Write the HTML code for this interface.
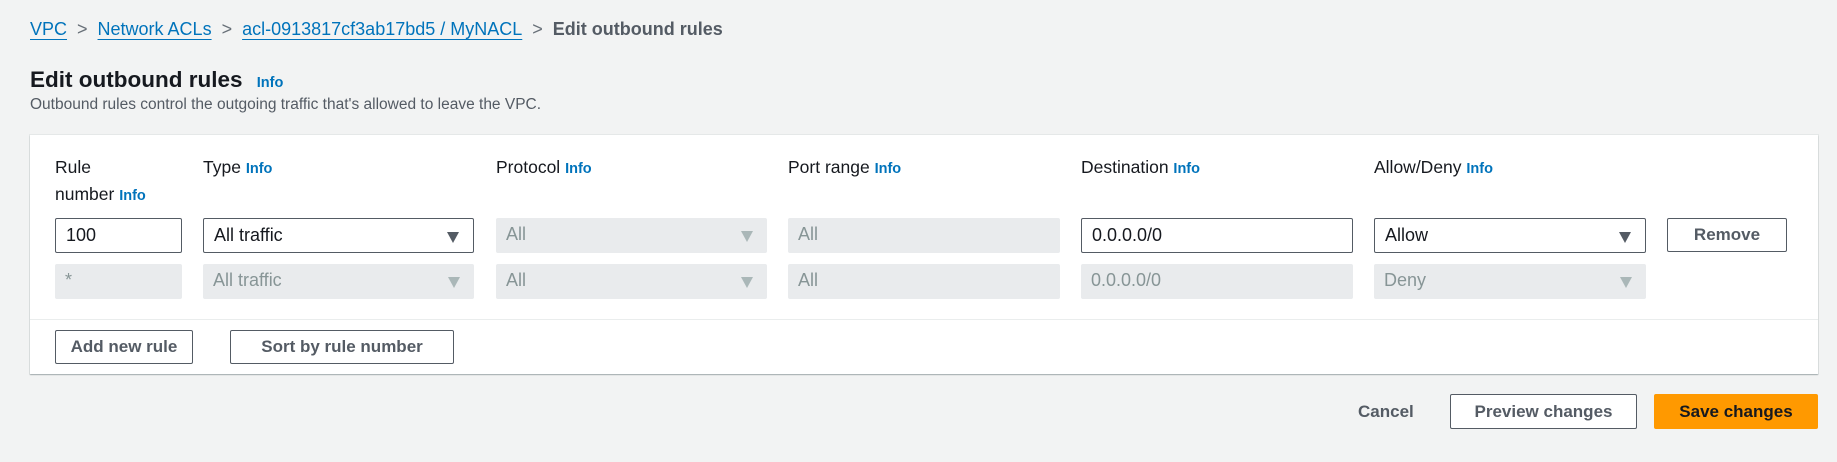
<!DOCTYPE html>
<html><head><style>
body{margin:0;width:1837px;height:462px;background:#f2f3f3;font-family:"Liberation Sans",sans-serif;color:#16191f;position:relative;overflow:hidden}
.a{position:absolute;white-space:nowrap}
.bc{top:19px;font-size:18px}
.bc a{color:#0073bb;text-decoration:underline;text-underline-offset:4px}
.sep{color:#687078;display:inline-block;margin:0 10px}
.info{color:#0073bb;font-weight:bold;font-size:14.5px}
.panel{left:30px;top:135px;width:1788px;height:239px;background:#fff;box-shadow:0 1px 1px rgba(0,28,36,.3),0 0 0 1px #e5e8e8}
.lab{font-size:17.5px;top:157px}
.in{position:absolute;box-sizing:border-box;height:35px;border:1px solid #545b64;border-radius:2px;background:#fff;font-size:18px;padding:6px 10px;color:#16191f}
.dis{border:none;background:#e9ebed;color:#879596}
.arr{position:absolute;right:14px;top:13px;width:0;height:0;border-left:6px solid transparent;border-right:6px solid transparent;border-top:11px solid #545b64}
.dis .arr{border-top-color:#aab7b8}
.btn{position:absolute;box-sizing:border-box;border:1px solid #545b64;border-radius:2px;background:#fff;font-weight:bold;font-size:17px;color:#545b64;text-align:center}
</style></head><body>
<div class="a bc" style="left:30px"><a>VPC</a><span class="sep">&gt;</span><a>Network ACLs</a><span class="sep">&gt;</span><a>acl-0913817cf3ab17bd5 / MyNACL</a><span class="sep">&gt;</span><b style="color:#545b64">Edit outbound rules</b></div>
<div class="a" style="left:30px;top:67px;font-size:22.5px;font-weight:bold">Edit outbound rules <span class="info" style="margin-left:8px">Info</span></div>
<div class="a" style="left:30px;top:96px;font-size:15.5px;color:#545b64">Outbound rules control the outgoing traffic that's allowed to leave the VPC.</div>
<div class="a panel"></div>
<div class="a lab" style="left:55px">Rule</div>
<div class="a lab" style="left:55px;top:184px">number <span class="info">Info</span></div>
<div class="a lab" style="left:203px">Type <span class="info">Info</span></div>
<div class="a lab" style="left:496px">Protocol <span class="info">Info</span></div>
<div class="a lab" style="left:788px">Port range <span class="info">Info</span></div>
<div class="a lab" style="left:1081px">Destination <span class="info">Info</span></div>
<div class="a lab" style="left:1374px">Allow/Deny <span class="info">Info</span></div>

<div class="in" style="left:55px;top:218px;width:127px">100</div>
<div class="in" style="left:203px;top:218px;width:271px">All traffic<span class="arr"></span></div>
<div class="in dis" style="left:496px;top:218px;width:271px">All<span class="arr"></span></div>
<div class="in dis" style="left:788px;top:218px;width:272px">All</div>
<div class="in" style="left:1081px;top:218px;width:272px">0.0.0.0/0</div>
<div class="in" style="left:1374px;top:218px;width:272px">Allow<span class="arr"></span></div>
<div class="btn" style="left:1667px;top:218px;width:120px;height:34px;line-height:32px">Remove</div>

<div class="in dis" style="left:55px;top:264px;width:127px">*</div>
<div class="in dis" style="left:203px;top:264px;width:271px">All traffic<span class="arr"></span></div>
<div class="in dis" style="left:496px;top:264px;width:271px">All<span class="arr"></span></div>
<div class="in dis" style="left:788px;top:264px;width:272px">All</div>
<div class="in dis" style="left:1081px;top:264px;width:272px">0.0.0.0/0</div>
<div class="in dis" style="left:1374px;top:264px;width:272px">Deny<span class="arr"></span></div>

<div class="a" style="left:30px;top:319px;width:1788px;height:1px;background:#eaeded"></div>
<div class="btn" style="left:55px;top:330px;width:138px;height:34px;line-height:32px">Add new rule</div>
<div class="btn" style="left:230px;top:330px;width:224px;height:34px;line-height:32px">Sort by rule number</div>

<div class="a" style="left:1358px;top:402px;font-size:17px;font-weight:bold;color:#545b64">Cancel</div>
<div class="btn" style="left:1450px;top:394px;width:187px;height:35px;line-height:33px">Preview changes</div>
<div class="btn" style="left:1654px;top:394px;width:164px;height:35px;line-height:33px;background:#ff9900;border-color:#ff9900;color:#16191f">Save changes</div>
</body></html>
